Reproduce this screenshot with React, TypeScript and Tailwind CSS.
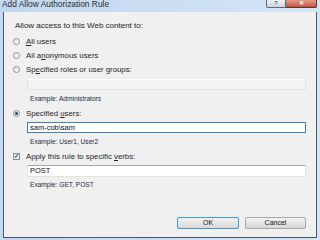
import React from "react";

const font = { fontFamily: '"Liberation Sans", Arial, sans-serif' };

function Radio({ label, checked }: { label: React.ReactNode; checked?: boolean }) {
  return (
    <div className="flex items-center h-[10px] gap-[6px]">
      <div className="w-[7px] h-[7px] rounded-full border border-[#8e8f8f] bg-gradient-to-br from-[#e6e6e6] to-[#fafafa] flex items-center justify-center">
        {checked && <div className="w-[3px] h-[3px] rounded-full bg-[#1c3f63]" />}
      </div>
      <span className="text-[7.8px] leading-[9px] text-[#1e1e1e]">{label}</span>
    </div>
  );
}

function Example({ text }: { text: string }) {
  return <div className="ml-[17px] h-[9px] text-[6.6px] leading-[9px] text-[#1d2a44]">{text}</div>;
}

export default function App() {
  return (
    <div
      className="w-[320px] h-[240px] bg-gradient-to-r from-[#c1d8f0] to-[#d3e4f6] overflow-hidden flex flex-col"
      style={font}
    >
      {/* title bar */}
      <div className="h-[12px] flex items-start justify-between shrink-0">
        <span className="ml-[2px] mt-0 text-[8.4px] leading-[8px] text-[#2b2b2b]">
          Add Allow Authorization Rule
        </span>
        <div className="flex mr-[3px]">
          <div className="w-[20px] h-[8px] border border-[#5b6578] border-t-0 rounded-bl-[2px] bg-gradient-to-b from-[#eef2f7] to-[#c9d4e2] text-[6px] leading-[7px] text-center text-[#333]">
            ?
          </div>
          <div className="w-[31px] h-[8px] border border-[#5b3535] border-t-0 border-l-0 rounded-br-[2px] bg-gradient-to-b from-[#e09a88] to-[#c7503c] text-[6px] leading-[7px] text-center text-white font-bold">
            ✕
          </div>
        </div>
      </div>

      {/* client area */}
      <div className="mx-[3px] h-[226px] bg-[#f0f0f0] border border-t-0 border-[#4e5563] flex flex-col pl-[9px] pr-[10px]">
        <div className="mt-[9px] ml-[2px] h-[9px] text-[8px] leading-[9px] text-[#1e1e1e]">
          Allow access to this Web content to:
        </div>
        <div className="mt-[6px]">
          <Radio label={<><u>A</u>ll users</>} />
        </div>
        <div className="mt-[4px]">
          <Radio label={<>All a<u>n</u>onymous users</>} />
        </div>
        <div className="mt-[4px]">
          <Radio label={<>Sp<u>e</u>cified roles or user groups:</>} />
        </div>
        <div className="mt-[5px] ml-[14px] h-[11px] border border-[#dbe1e8] border-t-white bg-[#f3f3f3]" />
        <div className="mt-[4px]">
          <Example text="Example: Administrators" />
        </div>
        <div className="mt-[5px]">
          <Radio checked label={<>Specified <u>u</u>sers:</>} />
        </div>
        <div className="mt-[4px] ml-[14px] h-[11px] border border-[#3f7fb8] bg-white pl-[2px] text-[7.5px] leading-[9px] text-[#111]">
          sam-cob\sam
        </div>
        <div className="mt-[4px]">
          <Example text="Example: User1, User2" />
        </div>
        <div className="mt-[5px] flex items-center h-[10px] gap-[6px]">
          <div className="w-[7px] h-[7px] border border-[#8e8f8f] bg-[#e4e8ef] flex items-center justify-center text-[6px] leading-[6px] text-[#2a4a78] font-bold">
            ✓
          </div>
          <span className="text-[7.8px] leading-[9px] text-[#1e1e1e]">
            Apply this rule to specific <u>v</u>erbs:
          </span>
        </div>
        <div className="mt-[4px] ml-[14px] h-[12px] border border-[#e2e3e4] border-t-[#a3a7ad] bg-white pl-[2px] text-[7.5px] leading-[10px] text-[#111]">
          POST
        </div>
        <div className="mt-[3px]">
          <Example text="Example: GET, POST" />
        </div>
        <div className="mt-[28px] flex justify-end gap-[6px] pr-[0px]">
          <div className="w-[62px] h-[12px] border border-[#3d9ad6] rounded-[2px] bg-gradient-to-b from-[#f2f2f2] to-[#d9d9d9] text-center text-[7px] leading-[10px] text-[#111]">
            OK
          </div>
          <div className="w-[61px] h-[12px] border border-[#a7a7a7] rounded-[2px] bg-gradient-to-b from-[#f2f2f2] to-[#d9d9d9] text-center text-[7px] leading-[10px] text-[#111]">
            Cancel
          </div>
        </div>
      </div>
    </div>
  );
}
